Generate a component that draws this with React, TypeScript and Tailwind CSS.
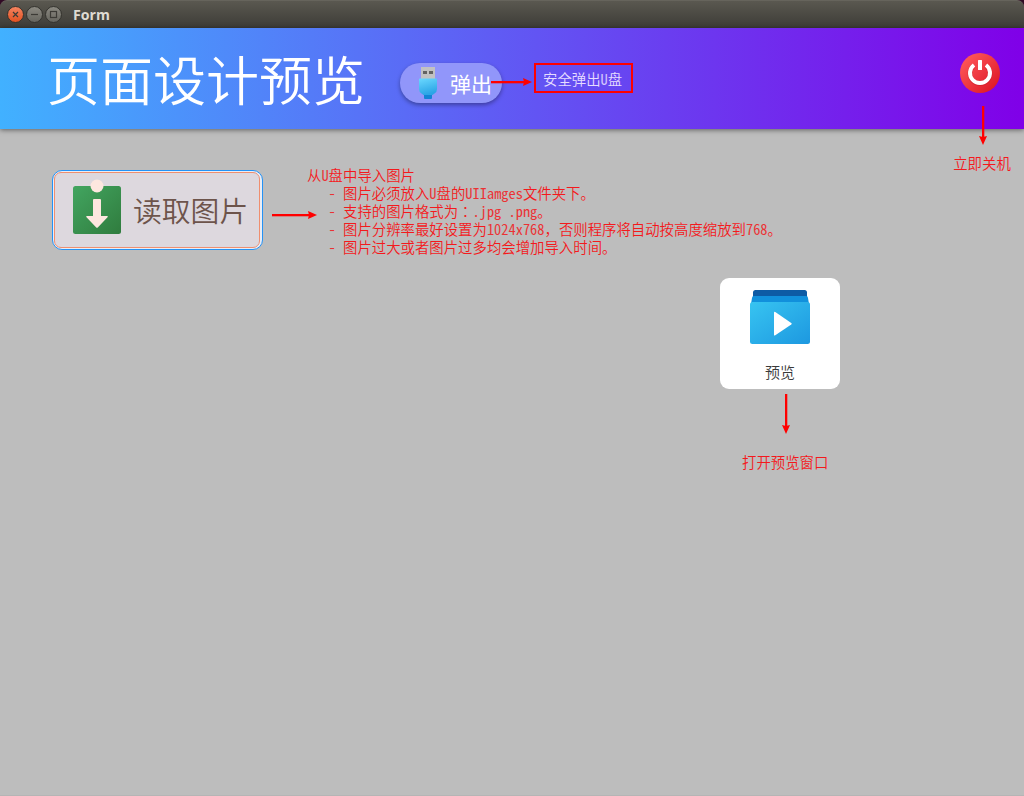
import React from "react";

const NOTE =
  "font-['Noto_Sans_Mono_CJK_SC','Noto_Sans_CJK_SC',monospace] text-[14.4px] leading-[18px] whitespace-pre text-[#f4191c]";

function NoteText({ children }: { children: string }) {
  const runs = children.match(/[\u3000-\u9fff\uff0c]+|：|[^\u3000-\u9fff\uff0c：]+/g) ?? [];
  return (
    <>
      {runs.map((run, i) =>
        run === "：" ? (
          <span key={i} className="font-['Noto_Sans_CJK_JP',sans-serif] font-[350]">{run}</span>
        ) : /[\u3000-\u9fff]/.test(run) ? (
          <span key={i} className="font-['Noto_Sans_CJK_SC',sans-serif] font-[350]">{run}</span>
        ) : (
          <span key={i} className="opacity-85">{run}</span>
        ),
      )}
    </>
  );
}

function Arrow({ length, down = false }: { length: number; down?: boolean }) {
  const w = down ? 10 : length;
  const h = down ? length : 10;
  const tip = length - 9;
  return (
    <svg width={w} height={h} viewBox={`0 0 ${w} ${h}`} className="block shrink-0" fill="#f00">
      {down ? (
        <>
          <rect x="4" y="0" width="2.300" height={tip + 2} />
          <path d={`M1 ${tip} L5 ${tip + 1} L9 ${tip} L5 ${length} Z`} />
        </>
      ) : (
        <>
          <rect x="0" y="4" width={tip + 2} height="2.300" />
          <path d={`M${tip} 1 L${tip + 1} 5 L${tip} 9 L${length} 5 Z`} />
        </>
      )}
    </svg>
  );
}

function TitleBar() {
  return (
    <div className="flex h-7 items-center bg-[#300a24]">
      <div className="flex h-7 w-full items-center rounded-t-[7px] border-t border-[#66645c] bg-linear-to-b from-[#5a5850] to-[#3d3c37] pl-[6px]">
        <svg width="58" height="20" viewBox="0 0 58 20" className="block">
          <defs>
            <linearGradient id="close" x1="0" y1="0" x2="0" y2="1">
              <stop offset="0" stopColor="#f58562" />
              <stop offset="1" stopColor="#e2501f" />
            </linearGradient>
            <linearGradient id="grey" x1="0" y1="0" x2="0" y2="1">
              <stop offset="0" stopColor="#8c8a82" />
              <stop offset="1" stopColor="#65645d" />
            </linearGradient>
          </defs>
          <circle cx="9.5" cy="9.5" r="8" fill="url(#close)" stroke="#33322d" />
          <circle cx="28.5" cy="9.5" r="8" fill="url(#grey)" stroke="#33322d" />
          <circle cx="47.5" cy="9.5" r="8" fill="url(#grey)" stroke="#33322d" />
          <g fill="none" stroke="#3c3b36" strokeWidth="1.2">
            <path d="M7 7l5 5M12 7l-5 5" />
            <path d="M25 9.500h7" />
            <rect x="44.5" y="6.5" width="6" height="6" />
          </g>
        </svg>
        <span className="ml-[9px] font-['Open_Sans',sans-serif] text-[14.2px] leading-5 font-bold text-[#dfdbd2]">Form</span>
      </div>
    </div>
  );
}

function UsbIcon() {
  return (
    <svg width="20" height="34" viewBox="0 0 20 34" className="block">
      <defs>
        <linearGradient id="usb" x1="0" y1="0" x2="0.3" y2="1">
          <stop offset="0" stopColor="#6bd8ff" />
          <stop offset="1" stopColor="#2ba5e6" />
        </linearGradient>
      </defs>
      <rect x="6" y="28" width="8" height="5" rx="1" fill="#1284d6" />
      <path d="M3 1h14v12H3z" fill="#c2c2c2" />
      <path d="M5 5h4v3H5zM11 5h4v3h-4z" fill="#636363" />
      <path d="M1 13.500q0-1 1-1h16q1 0 1 1V23q0 3-2.500 4.500l-2 1.500h-9l-2-1.500Q1 26 1 23z" fill="url(#usb)" />
    </svg>
  );
}

function PowerIcon() {
  return (
    <svg width="40" height="40" viewBox="0 0 40 40" className="block">
      <defs>
        <linearGradient id="power" x1="0" y1="0" x2="1" y2="1">
          <stop offset="0.15" stopColor="#fc5457" />
          <stop offset="0.9" stopColor="#de1826" />
        </linearGradient>
      </defs>
      <circle cx="20" cy="20" r="20" fill="url(#power)" />
      <path d="M14 12.500 A10 10 0 1 0 26 12.500" fill="none" stroke="#b91520" strokeOpacity=".35" strokeWidth="5" />
      <path d="M14 12 A10 10 0 1 0 26 12" fill="none" stroke="#fff" strokeWidth="4" />
      <rect x="18" y="7" width="4" height="10" rx=".5" fill="#fff" />
    </svg>
  );
}

function ImportIcon() {
  return (
    <svg width="48" height="56" viewBox="0 0 48 56" className="-mt-[7px] block">
      <defs>
        <linearGradient id="import" x1="0" y1="0" x2="1" y2="1">
          <stop offset="0" stopColor="#42a560" />
          <stop offset="1" stopColor="#307c3e" />
        </linearGradient>
      </defs>
      <rect y="7" width="48" height="48" rx="2.500" fill="url(#import)" />
      <circle cx="24" cy="7" r="6.500" fill="#fde7df" />
      <path d="M21 20h6q1 0 1 1v16h6q1.500 0 .5 1.300l-9.500 10q-1 1-2 0l-9.500-10q-1-1.300.5-1.300h6V21q0-1 1-1z" fill="#fde7df" />
    </svg>
  );
}

function PreviewIcon() {
  return (
    <svg width="60" height="54" viewBox="0 0 60 54" className="block">
      <defs>
        <linearGradient id="preview" x1="0" y1="0" x2="1" y2="1">
          <stop offset="0" stopColor="#37c4f1" />
          <stop offset="1" stopColor="#1d98e0" />
        </linearGradient>
      </defs>
      <path d="M3 10V2.500Q3 0 5.500 0h49Q57 0 57 2.500V10z" fill="#0d5ba5" />
      <path d="M1 14L2 8q0-2 2-2h52q2 0 2 2l1 6z" fill="#1190dc" />
      <rect y="12" width="60" height="42" rx="2.500" fill="url(#preview)" />
      <path d="M24 23q0-1.500 1.400-.7l16 10.700q1 .8 0 1.600l-16 10.700q-1.400.7-1.400-.8z" fill="#147bb9" opacity=".35" />
      <path d="M24 22.500q0-1.300 1.300-.5l16 11q1 .8 0 1.600l-16 10.700q-1.300.7-1.300-.6z" fill="#fff" />
    </svg>
  );
}

function Header() {
  return (
    <header className="relative z-10 flex h-[101px] bg-linear-to-r/srgb from-[#41b1ff] to-[#8000e8] pl-[47px] shadow-[0_1px_5px_rgba(0,0,0,0.5)]">
      <h1 className="mt-[10px] w-[353px] font-['Noto_Sans_CJK_SC',sans-serif] text-[53px] leading-[80px] font-[350] whitespace-nowrap text-white">
        页面设计预览
      </h1>
      <button className="mt-[35px] flex h-10 w-[102px] items-center rounded-full bg-[#9196fa] pl-[18px] shadow-[0_2px_4px_rgba(0,0,0,0.35)]">
        <UsbIcon />
        <span className="ml-3 font-['Noto_Sans_CJK_SC',sans-serif] text-[21px] leading-8 font-normal whitespace-nowrap text-white">弹出</span>
      </button>
      <div className="z-10 mt-[49px] -ml-[11px]">
        <Arrow length={41} />
      </div>
      <div className="mt-[35px] ml-[2px] h-[30px] w-[99px] border-2 border-[#f00] pt-[5px] pl-[7px]">
        <span className="block font-['Noto_Sans_Mono_CJK_SC','Noto_Sans_CJK_SC',monospace] text-[14.4px] leading-[18px] whitespace-pre text-[#e5dcff]">
          <NoteText>安全弹出U盘</NoteText>
        </span>
      </div>
      <div className="ml-auto flex w-[71px] flex-col items-center">
        <button className="mt-[25px] -ml-[17px]">
          <PowerIcon />
        </button>
        <div className="mt-[13px] -ml-[12px]">
          <Arrow length={39} down />
        </div>
        <p className={`${NOTE} mt-[9px] -ml-[13px]`}>
          <NoteText>立即关机</NoteText>
        </p>
      </div>
    </header>
  );
}

const HELP = [
  "从U盘中导入图片",
  "   - 图片必须放入U盘的UIIamges文件夹下。",
  "   - 支持的图片格式为：.jpg .png。",
  "   - 图片分辨率最好设置为1024x768，否则程序将自动按高度缩放到768。",
  "   - 图片过大或者图片过多均会增加导入时间。",
];

export default function App() {
  return (
    <div className="flex h-[796px] w-[1024px] flex-col overflow-hidden bg-[#bdbdbd]">
      <TitleBar />
      <Header />
      <main className="flex grow flex-col border-b border-[#b5b5b5]">
        <section className="flex h-[127px] pt-[37px] pl-[52px]">
          <button className="mt-1 flex h-20 w-[211px] rounded-[10px] border border-[#2492f5] bg-[#e9edf6] p-px">
            <span className="flex h-[76px] w-[206px] items-center rounded-[7px] border border-[#ef8f70] bg-[#ddd8de] pl-[18px]">
              <ImportIcon />
              <span className="ml-3 font-['Noto_Sans_CJK_SC',sans-serif] text-[28.8px] leading-10 font-[350] whitespace-nowrap text-[#6d544b]">读取图片</span>
            </span>
          </button>
          <div className="mt-11 ml-[9px]">
            <Arrow length={45} />
          </div>
          <div className={`${NOTE} -ml-[10px]`}>
            {HELP.map((line) => (
              <p key={line} className="h-[18px]">
                <NoteText>{line}</NoteText>
              </p>
            ))}
          </div>
        </section>
        <section className="mt-[22px] ml-[720px] flex w-[130px] flex-col items-start">
          <button className="flex h-[111px] w-[120px] flex-col items-center rounded-[9px] bg-white pt-3">
            <PreviewIcon />
            <span className="mt-[18px] font-['Noto_Sans_CJK_SC',sans-serif] text-[15px] leading-5 font-[350] text-[#3a3a3a]">预览</span>
          </button>
          <div className="mt-[5px] ml-[61px]">
            <Arrow length={40} down />
          </div>
          <p className={`${NOTE} mt-[19px] ml-[22px]`}>
            <NoteText>打开预览窗口</NoteText>
          </p>
        </section>
      </main>
    </div>
  );
}
